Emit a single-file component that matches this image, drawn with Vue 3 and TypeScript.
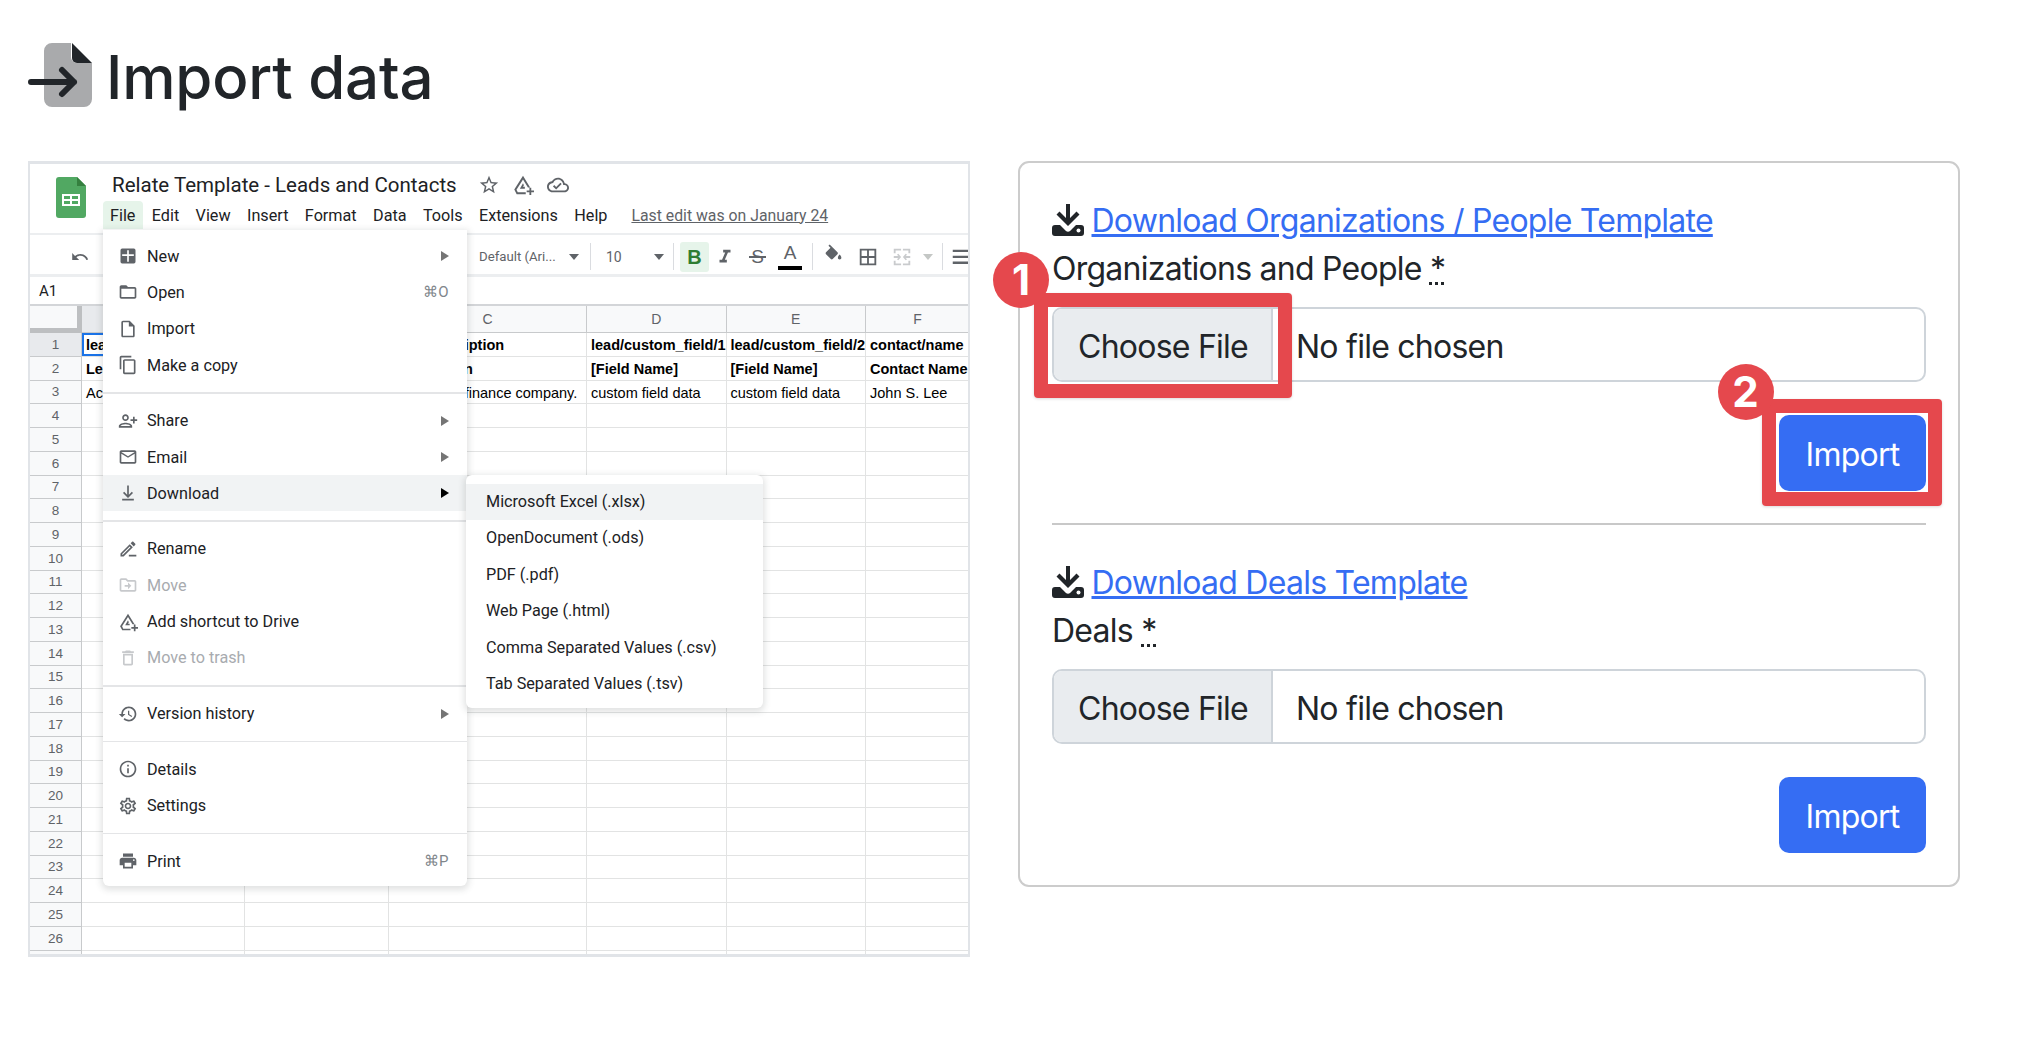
<script setup lang="ts">
import { ref } from "vue";

interface MenuEntry {
  label: string;
  icon: string;
  more?: boolean;
  keys?: string;
  off?: boolean;
  on?: boolean;
  flip?: boolean;
}

const paths: Record<string, string> = {
  newdoc: "M5 3h14a2 2 0 0 1 2 2v14a2 2 0 0 1-2 2H5a2 2 0 0 1-2-2V5a2 2 0 0 1 2-2zm6 2v5H5v2h6v7h2v-7h6v-2h-6V5z",
  open: "M20 6h-8l-2-2H4c-1.1 0-1.99.9-1.99 2L2 18c0 1.1.9 2 2 2h16c1.1 0 2-.9 2-2V8c0-1.1-.9-2-2-2zm0 12H4V8h16v10z",
  file: "M14 2H6c-1.1 0-2 .9-2 2v16c0 1.1.9 2 2 2h12c1.1 0 2-.9 2-2V8l-6-6zM18 20H6V4h7v5h5v11z",
  copy: "M16 1H4c-1.1 0-2 .9-2 2v14h2V3h12V1zm3 4H8c-1.1 0-2 .9-2 2v14c0 1.1.9 2 2 2h11c1.1 0 2-.9 2-2V7c0-1.1-.9-2-2-2zm0 16H8V7h11v14z",
  share: "M15 12c2.21 0 4-1.79 4-4s-1.79-4-4-4-4 1.79-4 4 1.79 4 4 4zm0-6c1.1 0 2 .9 2 2s-.9 2-2 2-2-.9-2-2 .9-2 2-2zm0 8c-2.67 0-8 1.34-8 4v2h16v-2c0-2.66-5.33-4-8-4zm-6 4c.22-.72 3.31-2 6-2 2.7 0 5.8 1.29 6 2H9zm-3-3v-3h3v-2H6V7H4v3H1v2h3v3h2z",
  email: "M20 4H4c-1.1 0-1.99.9-1.99 2L2 18c0 1.1.9 2 2 2h16c1.1 0 2-.9 2-2V6c0-1.1-.9-2-2-2zm0 14H4V8l8 5 8-5v10zm-8-7L4 6h16l-8 5z",
  download: "M13 3h-2v11.2l-3.6-3.6L6 12l6 6 6-6-1.4-1.4-3.6 3.6V3zM5 19v2h14v-2H5z",
  rename: "M14.06 9.02l.92.92L5.92 19H5v-.92l9.06-9.06M17.66 3c-.25 0-.51.1-.7.29l-1.83 1.83 3.75 3.75 1.83-1.83c.39-.39.39-1.02 0-1.41l-2.34-2.34c-.2-.2-.45-.29-.71-.29zm-3.6 3.19L3 17.25V21h3.75L17.81 9.94l-3.75-3.75zM13 19h9v2h-9z",
  move: "M20 6h-8l-2-2H4c-1.1 0-2 .9-2 2v12c0 1.1.9 2 2 2h16c1.1 0 2-.9 2-2V8c0-1.1-.9-2-2-2zm0 12H4V6h5.17l2 2H20v10zm-8-4H8v-2h4V9l4 4-4 4v-3z",
  drive: "M12 2 2.5 17l2.6 5H15v-2H6.3l-1.4-2.8L12 6l5.4 8.6h2.4zM12 10l-3.4 6H14v-2h-2l1-1.7zM19 15v3h-3v2h3v3h2v-3h3v-2h-3v-3z",
  trash: "M16 9v10H8V9h8m-1.5-6h-5l-1 1H5v2h14V4h-3.5l-1-1zM18 7H6v12c0 1.1.9 2 2 2h8c1.1 0 2-.9 2-2V7z",
  history: "M13 3c-4.97 0-9 4.03-9 9H1l3.89 3.89.07.14L9 12H6c0-3.87 3.13-7 7-7s7 3.13 7 7-3.13 7-7 7c-1.93 0-3.68-.79-4.94-2.06l-1.42 1.42C8.27 19.99 10.51 21 13 21c4.97 0 9-4.03 9-9s-4.03-9-9-9zm-1 5v5l4.28 2.54.72-1.21-3.5-2.08V8H12z",
  info: "M11 7h2v2h-2zm0 4h2v6h-2zm1-9C6.48 2 2 6.48 2 12s4.48 10 10 10 10-4.48 10-10S17.52 2 12 2zm0 18c-4.41 0-8-3.59-8-8s3.59-8 8-8 8 3.59 8 8-3.59 8-8 8z",
  settings: "M19.43 12.98c.04-.32.07-.64.07-.98 0-.34-.03-.66-.07-.98l2.11-1.65c.19-.15.24-.42.12-.64l-2-3.46c-.09-.16-.26-.25-.44-.25-.06 0-.12.01-.17.03l-2.49 1c-.52-.4-1.08-.73-1.69-.98l-.38-2.65C14.46 2.18 14.25 2 14 2h-4c-.25 0-.46.18-.49.42l-.38 2.65c-.61.25-1.17.59-1.69.98l-2.49-1c-.06-.02-.12-.03-.18-.03-.17 0-.34.09-.43.25l-2 3.46c-.13.22-.07.49.12.64l2.11 1.65c-.04.32-.07.65-.07.98 0 .33.03.66.07.98l-2.11 1.65c-.19.15-.24.42-.12.64l2 3.46c.09.16.26.25.44.25.06 0 .12-.01.17-.03l2.49-1c.52.4 1.08.73 1.69.98l.38 2.65c.03.24.24.42.49.42h4c.25 0 .46-.18.49-.42l.38-2.65c.61-.25 1.17-.59 1.69-.98l2.49 1c.06.02.12.03.18.03.17 0 .34-.09.43-.25l2-3.46c.12-.22.07-.49-.12-.64l-2.11-1.65zm-1.98-1.71c.04.31.05.52.05.73 0 .21-.02.43-.05.73l-.14 1.13.89.7 1.08.84-.7 1.21-1.27-.51-1.04-.42-.9.68c-.43.32-.84.56-1.25.73l-1.06.43-.16 1.13-.2 1.35h-1.4l-.19-1.35-.16-1.13-1.06-.43c-.43-.18-.83-.41-1.23-.71l-.91-.7-1.06.43-1.27.51-.7-1.21 1.08-.84.89-.7-.14-1.13c-.03-.31-.05-.54-.05-.74s.02-.43.05-.73l.14-1.13-.89-.7-1.08-.84.7-1.21 1.27.51 1.04.42.9-.68c.43-.32.84-.56 1.25-.73l1.06-.43.16-1.13.2-1.35h1.39l.19 1.35.16 1.13 1.06.43c.43.18.83.41 1.23.71l.91.7 1.06-.43 1.27-.51.7 1.21-1.07.85-.89.7.14 1.13zM12 8c-2.21 0-4 1.79-4 4s1.79 4 4 4 4-1.79 4-4-1.79-4-4-4zm0 6c-1.1 0-2-.9-2-2s.9-2 2-2 2 .9 2 2-.9 2-2 2z",
  print: "M19 8H5c-1.66 0-3 1.34-3 3v6h4v4h12v-4h4v-6c0-1.66-1.34-3-3-3zm-3 11H8v-5h8v5zm3-7c-.55 0-1-.45-1-1s.45-1 1-1 1 .45 1 1-.45 1-1 1zm-1-9H6v4h12V3z",
  star: "M22 9.24l-7.19-.62L12 2 9.19 8.63 2 9.24l5.46 4.73L5.82 21 12 17.27 18.18 21l-1.63-7.03L22 9.24zM12 15.4l-3.76 2.27 1-4.28-3.32-2.88 4.38-.38L12 6.1l1.71 4.04 4.38.38-3.32 2.88 1 4.28L12 15.4z",
  cloud: "M19.35 10.04C18.67 6.59 15.64 4 12 4 9.11 4 6.6 5.64 5.35 8.04 2.34 8.36 0 10.91 0 14c0 3.31 2.69 6 6 6h13c2.76 0 5-2.24 5-5 0-2.64-2.05-4.78-4.65-4.96zM19 18H6c-2.21 0-4-1.79-4-4 0-2.05 1.53-3.76 3.56-3.97l1.07-.11.5-.95C8.08 7.14 9.94 6 12 6c2.62 0 4.88 1.86 5.39 4.43l.3 1.5 1.53.11c1.56.1 2.78 1.41 2.78 2.96 0 1.65-1.35 3-3 3zm-9-3.82l-2.09-2.09L6.5 13.5 10 17l6.01-6.01-1.41-1.41z",
  undo: "M12.5 8c-2.65 0-5.05.99-6.9 2.6L2 7v9h9l-3.62-3.62c1.39-1.16 3.16-1.88 5.12-1.88 3.54 0 6.55 2.31 7.6 5.5l2.37-.78C21.08 11.03 17.15 8 12.5 8z",
  italic: "M10 4v3h2.21l-3.42 8H6v3h8v-3h-2.21l3.42-8H18V4z",
  fill: "M16.56 8.94L7.62 0 6.21 1.41l2.38 2.38-5.15 5.15c-.59.59-.59 1.54 0 2.12l5.5 5.5c.29.29.68.44 1.06.44s.77-.15 1.06-.44l5.5-5.5c.59-.58.59-1.53 0-2.12zM19 11.5s-2 2.17-2 3.5c0 1.1.9 2 2 2s2-.9 2-2c0-1.33-2-3.5-2-3.5z",
  borders: "M3 3v18h18V3H3zm8 16H5v-6h6v6zm0-8H5V5h6v6zm8 8h-6v-6h6v6zm0-8h-6V5h6v6z",
  merge: "M3 3h8v2H5v3H3zM13 3h8v5h-2V5h-6zM3 16h2v3h6v2H3zM19 16h2v5h-8v-2h6zM3 11h5L6.500 9.500 8 8.500 11 12l-3 3.500-1.500-1L8 13H3zM21 11h-5l1.500-1.500L16 8.500 13 12l3 3.500 1.500-1L16 13h5z",
  align: "M3 4h18v2.500H3zM3 10.500h18V13H3zM3 17h18v2.500H3z",
};

const menuGroups: MenuEntry[][] = [
  [
    { label: "New", icon: "newdoc", more: true },
    { label: "Open", icon: "open", keys: "⌘O" },
    { label: "Import", icon: "file" },
    { label: "Make a copy", icon: "copy" },
  ],
  [
    { label: "Share", icon: "share", more: true, flip: true },
    { label: "Email", icon: "email", more: true },
    { label: "Download", icon: "download", more: true, on: true },
  ],
  [
    { label: "Rename", icon: "rename" },
    { label: "Move", icon: "move", off: true },
    { label: "Add shortcut to Drive", icon: "drive" },
    { label: "Move to trash", icon: "trash", off: true },
  ],
  [{ label: "Version history", icon: "history", more: true }],
  [
    { label: "Details", icon: "info" },
    { label: "Settings", icon: "settings" },
  ],
  [{ label: "Print", icon: "print", keys: "⌘P" }],
];

const formats = [
  "Microsoft Excel (.xlsx)",
  "OpenDocument (.ods)",
  "PDF (.pdf)",
  "Web Page (.html)",
  "Comma Separated Values (.csv)",
  "Tab Separated Values (.tsv)",
];

const menuBar = ["File", "Edit", "View", "Insert", "Format", "Data", "Tools", "Extensions", "Help"];
const columns = ["A", "B", "C", "D", "E", "F"];

const cells: string[][] = [
  ["lead/name", "", "lead/description", "lead/custom_field/1", "lead/custom_field/2", "contact/name"],
  ["Lead Name", "", "Description", "[Field Name]", "[Field Name]", "Contact Name"],
  ["Acme", "", "Acme, is a finance company.", "custom field data", "custom field data", "John S. Lee"],
];

const rows = Array.from({ length: 27 }, (_, i) => i + 1);

const sections = ref([
  { id: "people", link: "Download Organizations / People Template", label: "Organizations and People", marked: true, file: "" },
  { id: "deals", link: "Download Deals Template", label: "Deals", marked: false, file: "" },
]);

function pickFile(e: Event, index: number) {
  const input = e.target as HTMLInputElement;
  sections.value[index].file = input.files?.[0]?.name ?? "";
}
</script>

<template>
  <div class="page">
    <h1 class="title">
      <svg class="title-icon" viewBox="0 0 64 64">
        <path fill="#a9aaac" d="M24 0h19v14a6 6 0 0 0 6 6h15v36a8 8 0 0 1-8 8H24a8 8 0 0 1-8-8V8a8 8 0 0 1 8-8z" />
        <path fill="#212529" d="M44 0l20 20H49a5 5 0 0 1-5-5z" />
        <path fill="none" stroke="#212529" stroke-width="6" stroke-linecap="round" stroke-linejoin="round" d="M3 39h43M34 27l12 12-12 12" />
      </svg>
      Import data
    </h1>

    <div class="columns">
      <div class="sheet">
        <header class="doc-head">
          <svg class="logo" viewBox="0 0 30 41">
            <path fill="#51a862" d="M3 0h18l9 9v29a3 3 0 0 1-3 3H3a3 3 0 0 1-3-3V3a3 3 0 0 1 3-3z" />
            <path fill="#35803f" d="M21 0l9 9h-9z" />
            <path fill="#fff" fill-rule="evenodd" d="M6 17h18v12H6zm2 2v3h6v-3zm8 0v3h6v-3zm-8 5v3h6v-3zm8 0v3h6v-3z" />
          </svg>
          <div class="doc-text">
            <div class="doc-title">
              <span class="doc-name">Relate Template - Leads and Contacts</span>
              <svg class="doc-icon" viewBox="0 0 24 24"><path :d="paths.star" /></svg>
              <svg class="doc-icon" viewBox="0 0 24 24"><path :d="paths.drive" /></svg>
              <svg class="doc-icon" viewBox="0 0 24 24"><path :d="paths.cloud" /></svg>
            </div>
            <nav class="menu-bar">
              <span v-for="m in menuBar" :key="m" class="menu-word" :class="{ active: m === 'File' }">{{ m }}</span>
              <a class="last-edit">Last edit was on January 24</a>
            </nav>
          </div>
        </header>

        <div class="toolbar">
          <svg class="tool undo" viewBox="0 0 24 24"><path :d="paths.undo" /></svg>
          <span class="font-name">Default (Ari...</span>
          <i class="caret"></i>
          <i class="tool-sep s1"></i>
          <span class="font-size">10</span>
          <i class="caret c2"></i>
          <i class="tool-sep s2"></i>
          <b class="bold">B</b>
          <span class="t-box"><svg class="tool" viewBox="0 0 24 24"><path :d="paths.italic" /></svg></span>
          <span class="t-strike">S</span>
          <span class="t-color">A</span>
          <i class="tool-sep s3"></i>
          <svg class="tool t-fill" viewBox="0 0 24 24"><path :d="paths.fill" /></svg>
          <svg class="tool t-borders" viewBox="0 0 24 24"><path :d="paths.borders" /></svg>
          <svg class="tool t-merge" viewBox="0 0 24 24"><path :d="paths.merge" /></svg>
          <i class="caret c3"></i>
          <i class="tool-sep s4"></i>
          <svg class="tool t-align" viewBox="0 0 24 24"><path :d="paths.align" /></svg>
        </div>

        <div class="formula">A1</div>

        <div class="grid">
          <div class="corner"></div>
          <div v-for="(c, i) in columns" :key="c" class="col-head" :class="{ picked: i === 0 }">{{ c }}</div>
          <template v-for="r in rows" :key="r">
            <div class="row-head" :class="{ picked: r === 1 }">{{ r < 27 ? r : "" }}</div>
            <div
              v-for="(c, i) in columns"
              :key="c"
              class="cell"
              :class="{ strong: r < 3, selected: r === 1 && i === 0 }"
            >{{ cells[r - 1]?.[i] }}</div>
          </template>
        </div>

        <div class="menu">
          <template v-for="(group, g) in menuGroups" :key="g">
            <hr v-if="g > 0" class="menu-sep" />
            <div
              v-for="item in group"
              :key="item.label"
              class="menu-item"
              :class="{ off: item.off, on: item.on }"
            >
              <svg class="menu-icon" :class="{ flip: item.flip }" viewBox="0 0 24 24"><path :d="paths[item.icon]" /></svg>
              <span class="menu-label">{{ item.label }}</span>
              <span v-if="item.keys" class="menu-keys">{{ item.keys }}</span>
              <i v-if="item.more" class="menu-more"></i>
            </div>
          </template>
        </div>

        <div class="submenu">
          <div v-for="(f, i) in formats" :key="f" class="sub-item" :class="{ on: i === 0 }">{{ f }}</div>
        </div>
      </div>

      <form class="card" @submit.prevent>
        <template v-for="(s, i) in sections" :key="s.id">
          <hr v-if="i > 0" class="divider" />
          <div class="link-line">
            <svg class="dl-icon" viewBox="0 0 32 32">
              <path fill="#212529" d="M14 0h4v14l6.500-6.500 3 3L16 22 4.500 10.500l3-3L14 14z" />
              <path fill="#212529" d="M3 21h5l6 6c1 1 3 1 4 0l6-6h5a3 3 0 0 1 3 3v5a3 3 0 0 1-3 3H3a3 3 0 0 1-3-3v-5a3 3 0 0 1 3-3z" />
              <circle cx="26.500" cy="26.500" r="2" fill="#fff" />
            </svg>
            <a class="dl-link" href="#">{{ s.link }}</a>
          </div>
          <label class="field-label" :for="s.id">{{ s.label }} <abbr title="required">*</abbr></label>
          <label class="file-box" :for="s.id">
            <span class="file-btn">
              Choose File
              <span v-if="s.marked" class="callout"><span class="badge b1">1</span></span>
            </span>
            <span class="file-name">{{ s.file || "No file chosen" }}</span>
            <input :id="s.id" class="file-input" type="file" @change="pickFile($event, i)" />
          </label>
          <div class="actions">
            <button class="import" type="submit">
              Import
              <span v-if="s.marked" class="callout c-import"><span class="badge b2">2</span></span>
            </button>
          </div>
        </template>
      </form>
    </div>
  </div>
</template>

<style>
body {
  background: #fff;
}
</style>

<style scoped>
.page {
  width: 2020px;
  height: 1056px;
  box-sizing: border-box;
  padding: 0 28px;
  overflow: hidden;
  font-family: Inter, "Liberation Sans", sans-serif;
  color: #212529;
}

.title {
  display: flex;
  align-items: center;
  gap: 14px;
  height: 161px;
  margin: 0;
  padding-bottom: 7px;
  box-sizing: border-box;
  font-size: 60px;
  font-weight: 500;
  letter-spacing: -0.2px;
}

.title-icon {
  width: 64px;
  height: 64px;
  flex: none;
  margin-bottom: 4px;
}

.columns {
  display: flex;
  gap: 48px;
  align-items: flex-start;
}

/* spreadsheet picture */
.sheet {
  position: relative;
  width: 942px;
  height: 796px;
  box-sizing: border-box;
  flex: none;
  overflow: hidden;
  border: 2px solid #e1e4e8;
  border-top-width: 3px;
  border-bottom-width: 3px;
  font-family: Roboto, "Liberation Sans", sans-serif;
  color: #202124;
}

.doc-head {
  display: flex;
  height: 69px;
  box-sizing: border-box;
  padding: 13px 0 0 26px;
  gap: 26px;
}

.logo {
  width: 30px;
  height: 41px;
  flex: none;
}

.doc-text {
  flex: 1;
}

.doc-title {
  display: flex;
  align-items: center;
  height: 22px;
  margin-top: -3px;
}

.doc-name {
  font-size: 20.5px;
  width: 365.5px;
  white-space: nowrap;
}

.doc-icon {
  width: 22px;
  height: 22px;
  margin-right: 12.5px;
  fill: #5f6368;
}

.menu-bar {
  display: flex;
  gap: 16.4px;
  align-items: center;
  margin: 8px 0 0 -2px;
  font-size: 16.2px;
  height: 22px;
}

.menu-word {
  white-space: nowrap;
}

.menu-word.active {
  position: relative;
  z-index: 0;
}

.menu-word.active::before {
  content: "";
  position: absolute;
  z-index: -1;
  left: -7px;
  right: -8px;
  top: -5px;
  bottom: -4px;
  background: #e6f4ea;
  border-radius: 4px 4px 0 0;
}

.last-edit {
  margin-left: 7.6px;
  font-size: 15.8px;
  color: #5f6368;
  text-decoration: underline;
  white-space: nowrap;
}

.toolbar {
  display: flex;
  align-items: center;
  height: 44px;
  box-sizing: border-box;
  padding-top: 4px;
  border-top: 2px solid #eceef0;
  border-bottom: 3px solid #eceef0;
  color: #5f6368;
  white-space: nowrap;
}

.tool {
  flex: none;
  width: 22px;
  height: 22px;
  fill: #5f6368;
}

.undo {
  margin-left: 39px;
  transform: scale(0.85);
}

.font-name {
  flex: none;
  margin-left: 388px;
  width: 80px;
  font-size: 13.2px;
}

.font-size {
  flex: none;
  margin-left: 15px;
  width: 44px;
  font-size: 14px;
}

.caret {
  flex: none;
  margin-left: 10px;
  width: 0;
  height: 0;
  border: 5px solid transparent;
  border-top: 6px solid #5f6368;
  border-bottom: 0;
}

.c2 {
  margin-left: 4px;
}

.c3 {
  border-top-color: #c4c7c5;
}

.tool-sep {
  flex: none;
  width: 1px;
  height: 27px;
  background: #dadce0;
}

.s1 {
  margin-left: 11px;
}

.s2 {
  margin-left: 9px;
}

.s3 {
  margin-left: 6px;
}

.s4 {
  margin-left: 9px;
}

.bold {
  flex: none;
  width: 29px;
  height: 30px;
  margin-left: 6px;
  line-height: 30px;
  text-align: center;
  background: #e6f4ea;
  border-radius: 3px;
  color: #2e7d32;
  font-size: 20px;
  font-family: "Liberation Sans", sans-serif;
}

.t-box,
.t-strike,
.t-color {
  flex: none;
  display: flex;
  justify-content: center;
  font-family: "Liberation Sans", sans-serif;
  font-size: 19px;
}

.t-box {
  width: 32px;
}

.t-strike {
  position: relative;
  width: 33px;
}

.t-strike::after {
  content: "";
  position: absolute;
  left: 8px;
  right: 8px;
  top: 10px;
  height: 2px;
  background: #5f6368;
}

.t-color {
  position: relative;
  width: 32px;
  height: 30px;
  line-height: 22px;
}

.t-color::after {
  content: "";
  position: absolute;
  left: 4px;
  right: 4px;
  top: 24px;
  height: 4px;
  background: #000;
}

.t-fill {
  margin-left: 9.5px;
  width: 21px;
  transform: translateY(-2px);
}

.t-borders {
  margin-left: 13.5px;
}

.t-merge {
  margin-left: 12px;
  fill: #c9cbcd;
}

.t-align {
  margin-left: 7px;
}

.formula {
  height: 29px;
  box-sizing: border-box;
  padding-left: 9px;
  line-height: 28px;
  font-size: 15px;
  border-bottom: 2px solid #d3d5d8;
}

.grid {
  display: grid;
  grid-template-columns: 52px 163px 144px 198px 139.5px 139.5px 104px;
  grid-template-rows: 27px;
  grid-auto-rows: 23.76px;
  font-family: "Liberation Sans", sans-serif;
}

.corner {
  box-sizing: border-box;
  background: #f8f9fa;
  border-right: 5px solid #bdbfc1;
  border-bottom: 5px solid #bdbfc1;
}

.col-head,
.row-head {
  display: flex;
  align-items: center;
  justify-content: center;
  box-sizing: border-box;
  background: #f8f9fa;
  font-size: 13.5px;
  color: #5f6368;
  border-right: 1.5px solid #c8cacc;
  border-bottom: 1.5px solid #c8cacc;
}

.col-head {
  font-size: 14px;
}

.picked {
  background: #e8eaed;
}

.cell {
  box-sizing: border-box;
  padding: 0 0 0 4px;
  overflow: hidden;
  white-space: nowrap;
  line-height: 25px;
  font-size: 14.5px;
  color: #000;
  border-right: 1.5px solid #e2e3e3;
  border-bottom: 1.5px solid #e2e3e3;
}

.cell.strong {
  font-weight: 700;
}

.cell.selected {
  box-shadow: inset 0 0 0 2px #1a73e8;
}

/* open menus, on top of the sheet */
.menu {
  position: absolute;
  left: 72.5px;
  top: 66px;
  width: 364px;
  height: 656px;
  box-sizing: border-box;
  padding: 8px 0;
  background: #fff;
  border-radius: 0 0 6px 6px;
  box-shadow: 0 2px 6px 2px rgba(60, 64, 67, 0.15);
  font-size: 16.2px;
  z-index: 2;
}

.menu-sep {
  height: 1.6px;
  margin: 8.9px 0;
  border: 0;
  background: #e4e5e7;
}

.menu-item {
  display: flex;
  align-items: center;
  height: 36.3px;
  padding-right: 18px;
}

.menu-item.on {
  background: #f1f3f4;
}

.menu-item.off {
  color: #a8abaf;
}

.menu-icon {
  flex: none;
  width: 20px;
  height: 20px;
  margin: 0 9.5px 0 15px;
  fill: #5f6368;
}

.menu-icon.flip {
  transform: scaleX(-1);
}

.menu-item.off .menu-icon {
  fill: #c7c9cc;
}

.menu-label {
  flex: 1;
}

.menu-keys {
  color: #80868b;
  font-size: 15px;
}

.menu-more {
  width: 0;
  height: 0;
  border: 5px solid transparent;
  border-left: 8px solid #757575;
  border-right: 0;
}

.menu-item.on .menu-more {
  border-left-color: #000;
}

.submenu {
  position: absolute;
  left: 436px;
  top: 311px;
  width: 297px;
  height: 233px;
  box-sizing: border-box;
  padding: 9px 0 0;
  background: #fff;
  border-radius: 6px;
  box-shadow: 0 2px 6px 2px rgba(60, 64, 67, 0.15);
  font-size: 16.2px;
  z-index: 3;
}

.sub-item {
  height: 36.4px;
  line-height: 36.4px;
  padding-left: 20px;
  white-space: nowrap;
}

.sub-item.on {
  background: #f1f3f4;
}

/* import form */
.card {
  flex: none;
  width: 942px;
  height: 726px;
  box-sizing: border-box;
  padding: 34px 32px 0;
  border: 2px solid #ccc;
  border-radius: 11px;
  font-size: 32px;
  line-height: 48px;
  letter-spacing: -0.75px;
}

.link-line {
  display: flex;
  align-items: center;
  gap: 7.5px;
  height: 48px;
}

.dl-icon {
  flex: none;
  width: 32px;
  height: 32px;
  margin-top: -2px;
}

.dl-link {
  color: #356df3;
  text-decoration: underline;
}

.field-label {
  display: block;
  height: 48px;
  margin-bottom: 14px;
}

abbr {
  text-decoration: underline dotted;
  cursor: help;
}

.file-box {
  display: flex;
  height: 75px;
  box-sizing: border-box;
  border: 2px solid #ced4da;
  border-radius: 10px;
  line-height: 75px;
}

.file-btn {
  position: relative;
  flex: none;
  width: 219px;
  box-sizing: border-box;
  padding-left: 24px;
  background: #e9ecef;
  border-right: 2px solid #ced4da;
  border-radius: 8px 0 0 8px;
}

.file-name {
  padding-left: 23px;
}

.file-input {
  display: none;
}

.actions {
  display: flex;
  justify-content: flex-end;
  margin-top: 33px;
}

.import {
  position: relative;
  width: 147px;
  height: 76px;
  padding: 3px 0 0;
  border: 0;
  border-radius: 10px;
  background: #356df3;
  color: #fff;
  font: inherit;
  letter-spacing: inherit;
}

.divider {
  height: 2px;
  margin: 32px 0 34px;
  border: 0;
  background: #c8c8c8;
}

/* red annotations */
.callout {
  position: absolute;
  left: -20px;
  right: -20.5px;
  top: -16px;
  bottom: -18px;
  border: 14px solid #e5484d;
  border-radius: 4px;
  box-shadow: 0 1px 3px rgba(0, 0, 0, 0.15);
  pointer-events: none;
}

.c-import {
  left: -17px;
  right: -16px;
  top: -16px;
  bottom: -15px;
}

.badge {
  position: absolute;
  width: 56px;
  height: 56px;
  border-radius: 50%;
  background: #e5484d;
  color: #fff;
  font-size: 42px;
  font-weight: 700;
  letter-spacing: 0;
  line-height: 56px;
  text-align: center;
}

.b1 {
  left: -55px;
  top: -55px;
}

.b2 {
  left: -58.5px;
  top: -49px;
}
</style>
